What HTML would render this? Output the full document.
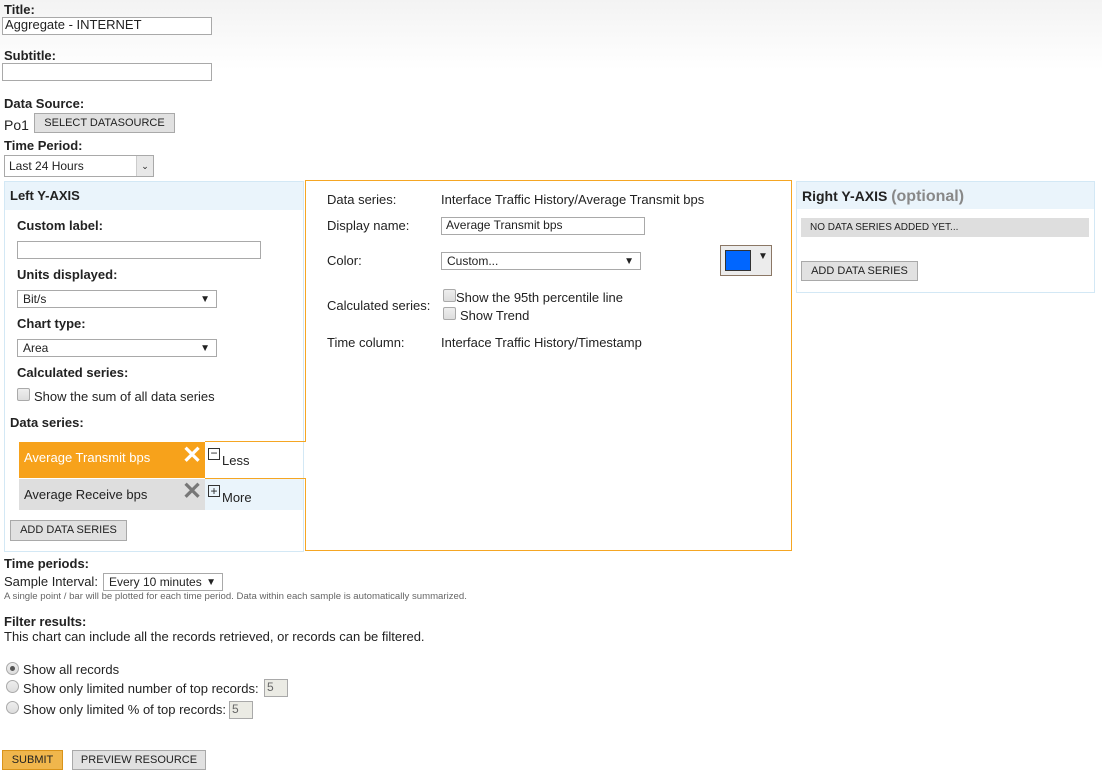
<!DOCTYPE html>
<html><head><style>
body{margin:0;width:1102px;height:771px;position:relative;font-family:"Liberation Sans",Arial,sans-serif;font-size:13px;color:#222;background:linear-gradient(#f3f3f3,#fff 70px);overflow:hidden}
.a{position:absolute;white-space:nowrap}
b{font-weight:bold}
.inp{position:absolute;border:1px solid #a9a9a9;background:#fff;height:16px;box-sizing:border-box;font-size:12px;padding-left:2px;line-height:14px}
.btn{position:absolute;border:1px solid #a9a9a9;background:#e1e1e1;font-size:11px;text-align:center;box-sizing:border-box;color:#222}
.sel{position:absolute;border:1px solid #a9a9a9;background:#fff;box-sizing:border-box;font-size:12px;padding-left:5px}
.sel:after{content:"▼";position:absolute;right:6px;top:1px;font-size:10px}
.cb{position:absolute;width:13px;height:13px;border:1px solid #aaa;border-radius:2px;background:linear-gradient(#eee,#ddd);box-sizing:border-box}
.rd{position:absolute;width:13px;height:13px;border:1px solid #aaa;border-radius:50%;background:linear-gradient(#eee,#ddd);box-sizing:border-box}
</style></head><body>
<div class="a" style="left:4px;top:2px"><b>Title:</b></div>
<div class="inp" style="left:2px;top:17px;width:210px;height:18px;font-size:13px">Aggregate - INTERNET</div>
<div class="a" style="left:4px;top:48px"><b>Subtitle:</b></div>
<div class="inp" style="left:2px;top:63px;width:210px;height:18px"></div>
<div class="a" style="left:4px;top:96px"><b>Data Source:</b></div>
<div class="a" style="left:4px;top:117px;font-size:14px">Po1</div>
<div class="btn" style="left:34px;top:113px;width:141px;height:20px;line-height:18px">SELECT DATASOURCE</div>
<div class="a" style="left:4px;top:138px"><b>Time Period:</b></div>
<div class="inp" style="left:4px;top:155px;width:150px;height:22px;line-height:20px;padding-left:4px">Last 24 Hours<span style="position:absolute;right:0;top:0;width:16px;height:20px;background:#e8e8e8;border-left:1px solid #ccc;font-size:9px;text-align:center">⌄</span></div>

<div class="a" style="left:4px;top:181px;width:298px;height:369px;border:1px solid #d3e8f5"></div>
<div class="a" style="left:5px;top:182px;width:298px;height:28px;background:#eaf4fb"></div>
<div class="a" style="left:10px;top:188px"><b>Left Y-AXIS</b></div>
<div class="a" style="left:17px;top:218px"><b>Custom label:</b></div>
<div class="inp" style="left:17px;top:241px;width:244px;height:18px"></div>
<div class="a" style="left:17px;top:267px"><b>Units displayed:</b></div>
<div class="sel" style="left:17px;top:290px;width:200px;height:18px;line-height:16px">Bit/s</div>
<div class="a" style="left:17px;top:316px"><b>Chart type:</b></div>
<div class="sel" style="left:17px;top:339px;width:200px;height:18px;line-height:16px">Area</div>
<div class="a" style="left:17px;top:365px"><b>Calculated series:</b></div>
<div class="cb" style="left:17px;top:388px"></div>
<div class="a" style="left:34px;top:389px">Show the sum of all data series</div>
<div class="a" style="left:10px;top:415px"><b>Data series:</b></div>
<div class="a" style="left:19px;top:442px;width:186px;height:36px;background:#f7a21b"></div>
<div class="a" style="left:24px;top:450px;color:#fff">Average Transmit bps</div>
<div class="a" style="left:182px;top:441px;color:#fff;font-size:24px;font-weight:bold">✕</div>
<div class="a" style="left:19px;top:479px;width:186px;height:31px;background:#dedede"></div>
<div class="a" style="left:205px;top:479px;width:98px;height:31px;background:#eaf4fb"></div>
<div class="a" style="left:24px;top:487px">Average Receive bps</div>
<div class="a" style="left:182px;top:477px;color:#777;font-size:24px;font-weight:bold">✕</div>
<div class="a" style="left:208px;top:448px;width:12px;height:12px;border:1px solid #333;box-sizing:border-box;font-size:12px;line-height:9px;text-align:center">−</div>
<div class="a" style="left:222px;top:453px">Less</div>
<div class="a" style="left:208px;top:485px;width:12px;height:12px;border:1px solid #333;box-sizing:border-box;font-size:12px;line-height:10px;text-align:center">+</div>
<div class="a" style="left:222px;top:490px">More</div>
<div class="btn" style="left:10px;top:520px;width:117px;height:21px;line-height:19px">ADD DATA SERIES</div>

<div class="a" style="left:305px;top:180px;width:487px;height:371px;border:1px solid #f5a623;box-sizing:border-box;border-left:none"></div>
<div class="a" style="left:305px;top:180px;width:1px;height:262px;background:#f5a623"></div>
<div class="a" style="left:205px;top:441px;width:101px;height:1px;background:#f5a623"></div>
<div class="a" style="left:205px;top:478px;width:101px;height:1px;background:#f5a623"></div>
<div class="a" style="left:305px;top:478px;width:1px;height:73px;background:#f5a623"></div>
<div class="a" style="left:327px;top:192px">Data series:</div>
<div class="a" style="left:441px;top:192px">Interface Traffic History/Average Transmit bps</div>
<div class="a" style="left:327px;top:218px">Display name:</div>
<div class="inp" style="left:441px;top:217px;width:204px;height:18px;padding-left:4px">Average Transmit bps</div>
<div class="a" style="left:327px;top:253px">Color:</div>
<div class="sel" style="left:441px;top:252px;width:200px;height:18px;line-height:16px">Custom...</div>
<div class="a" style="left:720px;top:245px;width:52px;height:31px;border:1px solid #8b7765;background:#ececec;box-sizing:border-box"></div>
<div class="a" style="left:725px;top:250px;width:26px;height:21px;background:#0066ff;border:1px solid #333;box-sizing:border-box"></div>
<div class="a" style="left:758px;top:251px;font-size:10px">▼</div>
<div class="a" style="left:327px;top:298px">Calculated series:</div>
<div class="cb" style="left:443px;top:289px"></div>
<div class="a" style="left:456px;top:290px">Show the 95th percentile line</div>
<div class="cb" style="left:443px;top:307px"></div>
<div class="a" style="left:460px;top:308px">Show Trend</div>
<div class="a" style="left:327px;top:335px">Time column:</div>
<div class="a" style="left:441px;top:335px">Interface Traffic History/Timestamp</div>

<div class="a" style="left:796px;top:181px;width:297px;height:110px;border:1px solid #d3e8f5;background:#fff"></div>
<div class="a" style="left:797px;top:182px;width:297px;height:27px;background:#eaf4fb"></div>
<div class="a" style="left:802px;top:188px;font-size:14px"><b>Right Y-AXIS</b> <b style="color:#888;font-size:16px">(optional)</b></div>
<div class="a" style="left:801px;top:218px;width:288px;height:19px;background:#dedede;font-size:10px;line-height:19px;padding-left:9px;box-sizing:border-box">NO DATA SERIES ADDED YET...</div>
<div class="btn" style="left:801px;top:261px;width:117px;height:20px;line-height:18px">ADD DATA SERIES</div>

<div class="a" style="left:4px;top:556px"><b>Time periods:</b></div>
<div class="a" style="left:4px;top:574px">Sample Interval:</div>
<div class="sel" style="left:103px;top:573px;width:120px;height:18px;line-height:16px;font-size:12px">Every 10 minutes</div>
<div class="a" style="left:4px;top:591px;font-size:9.6px;color:#666">A single point / bar will be plotted for each time period. Data within each sample is automatically summarized.</div>
<div class="a" style="left:4px;top:614px"><b>Filter results:</b></div>
<div class="a" style="left:4px;top:629px">This chart can include all the records retrieved, or records can be filtered.</div>
<div class="rd" style="left:6px;top:662px"></div>
<div class="a" style="left:10px;top:666px;width:5px;height:5px;border-radius:50%;background:#555"></div>
<div class="a" style="left:23px;top:662px">Show all records</div>
<div class="rd" style="left:6px;top:680px"></div>
<div class="a" style="left:23px;top:681px">Show only limited number of top records:</div>
<div class="inp" style="left:264px;top:679px;width:24px;height:18px;background:#ebebe4;color:#666">5</div>
<div class="rd" style="left:6px;top:701px"></div>
<div class="a" style="left:23px;top:702px">Show only limited % of top records:</div>
<div class="inp" style="left:229px;top:701px;width:24px;height:18px;background:#ebebe4;color:#666">5</div>
<div class="btn" style="left:2px;top:750px;width:61px;height:20px;line-height:18px;background:#f0b64c;border-color:#d9931a">SUBMIT</div>
<div class="btn" style="left:72px;top:750px;width:134px;height:20px;line-height:18px">PREVIEW RESOURCE</div>
</body></html>
